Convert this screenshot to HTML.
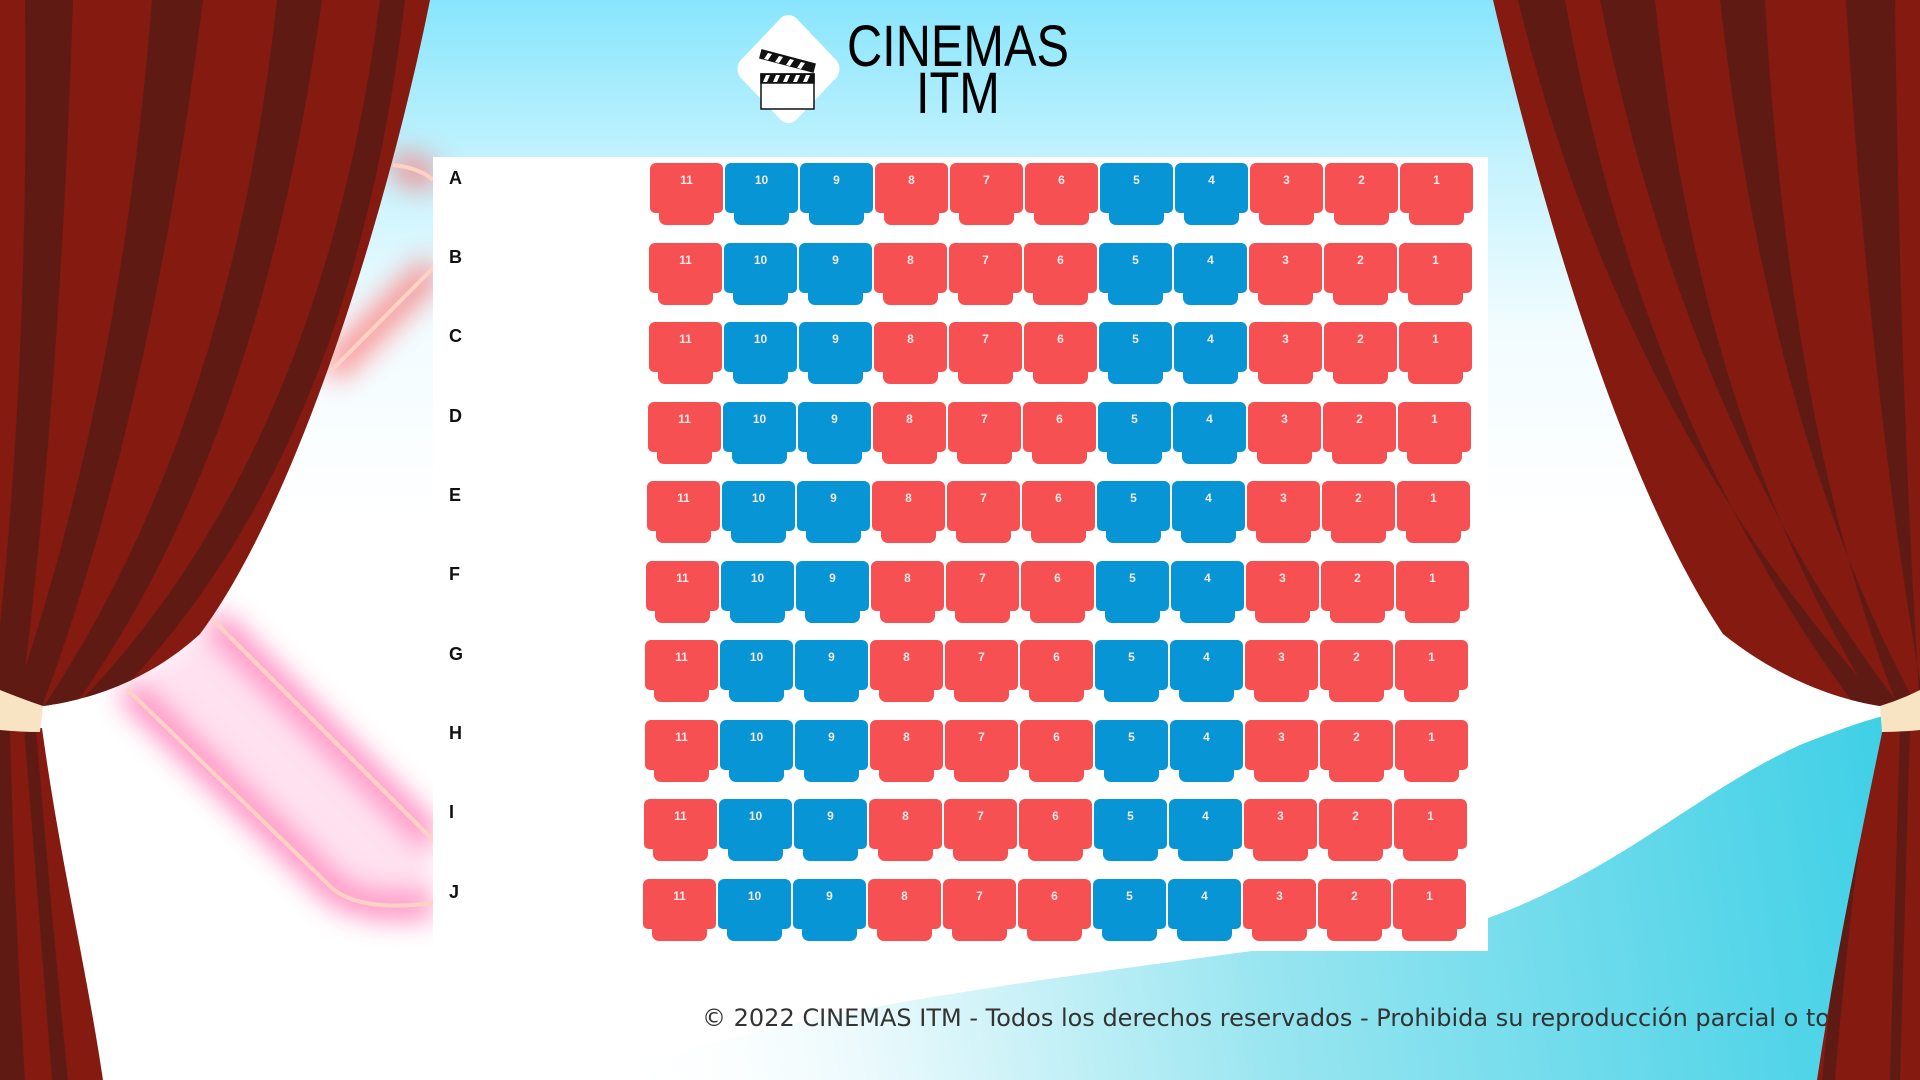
<!DOCTYPE html>
<html><head><meta charset="utf-8"><style>
*{margin:0;padding:0;box-sizing:border-box}
html,body{width:1920px;height:1080px;overflow:hidden}
body{position:relative;background:linear-gradient(#88e5fd 0,#c6f3fd 170px,#f2fcff 330px,#fff 520px);font-family:"Liberation Sans",sans-serif}
svg.bg{position:absolute;left:0;top:0}
.panel{position:absolute;left:433px;top:157px;width:1055px;height:794px;background:#fff}
.lbl{position:absolute;left:449px;font:bold 18px "Liberation Sans",sans-serif;color:#111}
.row{position:absolute;display:flex;gap:2px}
.s{position:relative;width:73px;height:62px}
.s::before{content:"";position:absolute;left:0;top:0;width:73px;height:50px;border-radius:6px 6px 5px 5px}
.s::after{content:"";position:absolute;left:9px;top:44px;width:55px;height:18px;border-radius:0 0 7px 7px}
.r::before,.r::after{background:#f65052}
.b::before,.b::after{background:#0895d5}
.s span{position:absolute;left:0;right:0;top:10px;text-align:center;color:#f4e9e9;font:bold 12px "Liberation Sans",sans-serif;z-index:2}
.logo{position:absolute;left:732px;top:12px;width:113px;height:114px}
.t{position:absolute;font-family:"Liberation Sans",sans-serif;color:#000;transform-origin:0 0;line-height:1}
.foot{position:absolute;left:702px;top:1004px;font:24px "DejaVu Sans","Liberation Sans",sans-serif;color:#333;white-space:nowrap}
svg.fg{position:absolute;left:0;top:0}
</style></head><body>
<svg class="bg" width="1920" height="1080">
<defs>
<filter id="bl" x="-50%" y="-50%" width="200%" height="200%"><feGaussianBlur stdDeviation="14"/></filter>
<linearGradient id="wv" x1="600" y1="1000" x2="1920" y2="800" gradientUnits="userSpaceOnUse">
<stop offset="0" stop-color="#fff" stop-opacity="0"/><stop offset=".2" stop-color="#e8f9fc"/><stop offset=".5" stop-color="#97e5f0"/><stop offset="1" stop-color="#3ccfe6"/></linearGradient>
</defs>
<path d="M600 1080 C800 1000 1100 975 1488 918 C1620 870 1700 790 1800 745 C1850 725 1890 712 1920 708 V1080 Z" fill="url(#wv)"/>
<g filter="url(#bl)" opacity=".8">
<path d="M393 165 Q420 170 433 182 M433 268 L330 372" fill="none" stroke="#ff6a6a" stroke-width="26"/>
<path d="M213 620 L433 840 L433 905 Q360 912 333 889 L127 689 Z" fill="#ff9fd0" opacity=".4"/>
<path d="M213 620 L433 840 M127 689 L333 889 Q360 912 433 905" fill="none" stroke="#ff4fa0" stroke-width="22"/>
</g>
<g fill="none" stroke="#ffd3c4" stroke-width="4">
<path d="M393 165 Q420 168 433 180"/>
<path d="M433 268 L330 372"/>
<path d="M213 620 L433 840"/>
<path d="M127 689 L333 889 Q362 912 433 903"/>
</g>
</svg>
<div class="panel"></div>
<div class="lbl" style="top:168px">A</div>
<div class="lbl" style="top:247px">B</div>
<div class="lbl" style="top:326px">C</div>
<div class="lbl" style="top:406px">D</div>
<div class="lbl" style="top:485px">E</div>
<div class="lbl" style="top:564px">F</div>
<div class="lbl" style="top:644px">G</div>
<div class="lbl" style="top:723px">H</div>
<div class="lbl" style="top:802px">I</div>
<div class="lbl" style="top:882px">J</div>

<div class="row" style="left:650px;top:163px"><div class="s r"><span>11</span></div><div class="s b"><span>10</span></div><div class="s b"><span>9</span></div><div class="s r"><span>8</span></div><div class="s r"><span>7</span></div><div class="s r"><span>6</span></div><div class="s b"><span>5</span></div><div class="s b"><span>4</span></div><div class="s r"><span>3</span></div><div class="s r"><span>2</span></div><div class="s r"><span>1</span></div></div>
<div class="row" style="left:649px;top:243px"><div class="s r"><span>11</span></div><div class="s b"><span>10</span></div><div class="s b"><span>9</span></div><div class="s r"><span>8</span></div><div class="s r"><span>7</span></div><div class="s r"><span>6</span></div><div class="s b"><span>5</span></div><div class="s b"><span>4</span></div><div class="s r"><span>3</span></div><div class="s r"><span>2</span></div><div class="s r"><span>1</span></div></div>
<div class="row" style="left:649px;top:322px"><div class="s r"><span>11</span></div><div class="s b"><span>10</span></div><div class="s b"><span>9</span></div><div class="s r"><span>8</span></div><div class="s r"><span>7</span></div><div class="s r"><span>6</span></div><div class="s b"><span>5</span></div><div class="s b"><span>4</span></div><div class="s r"><span>3</span></div><div class="s r"><span>2</span></div><div class="s r"><span>1</span></div></div>
<div class="row" style="left:648px;top:402px"><div class="s r"><span>11</span></div><div class="s b"><span>10</span></div><div class="s b"><span>9</span></div><div class="s r"><span>8</span></div><div class="s r"><span>7</span></div><div class="s r"><span>6</span></div><div class="s b"><span>5</span></div><div class="s b"><span>4</span></div><div class="s r"><span>3</span></div><div class="s r"><span>2</span></div><div class="s r"><span>1</span></div></div>
<div class="row" style="left:647px;top:481px"><div class="s r"><span>11</span></div><div class="s b"><span>10</span></div><div class="s b"><span>9</span></div><div class="s r"><span>8</span></div><div class="s r"><span>7</span></div><div class="s r"><span>6</span></div><div class="s b"><span>5</span></div><div class="s b"><span>4</span></div><div class="s r"><span>3</span></div><div class="s r"><span>2</span></div><div class="s r"><span>1</span></div></div>
<div class="row" style="left:646px;top:561px"><div class="s r"><span>11</span></div><div class="s b"><span>10</span></div><div class="s b"><span>9</span></div><div class="s r"><span>8</span></div><div class="s r"><span>7</span></div><div class="s r"><span>6</span></div><div class="s b"><span>5</span></div><div class="s b"><span>4</span></div><div class="s r"><span>3</span></div><div class="s r"><span>2</span></div><div class="s r"><span>1</span></div></div>
<div class="row" style="left:645px;top:640px"><div class="s r"><span>11</span></div><div class="s b"><span>10</span></div><div class="s b"><span>9</span></div><div class="s r"><span>8</span></div><div class="s r"><span>7</span></div><div class="s r"><span>6</span></div><div class="s b"><span>5</span></div><div class="s b"><span>4</span></div><div class="s r"><span>3</span></div><div class="s r"><span>2</span></div><div class="s r"><span>1</span></div></div>
<div class="row" style="left:645px;top:720px"><div class="s r"><span>11</span></div><div class="s b"><span>10</span></div><div class="s b"><span>9</span></div><div class="s r"><span>8</span></div><div class="s r"><span>7</span></div><div class="s r"><span>6</span></div><div class="s b"><span>5</span></div><div class="s b"><span>4</span></div><div class="s r"><span>3</span></div><div class="s r"><span>2</span></div><div class="s r"><span>1</span></div></div>
<div class="row" style="left:644px;top:799px"><div class="s r"><span>11</span></div><div class="s b"><span>10</span></div><div class="s b"><span>9</span></div><div class="s r"><span>8</span></div><div class="s r"><span>7</span></div><div class="s r"><span>6</span></div><div class="s b"><span>5</span></div><div class="s b"><span>4</span></div><div class="s r"><span>3</span></div><div class="s r"><span>2</span></div><div class="s r"><span>1</span></div></div>
<div class="row" style="left:643px;top:879px"><div class="s r"><span>11</span></div><div class="s b"><span>10</span></div><div class="s b"><span>9</span></div><div class="s r"><span>8</span></div><div class="s r"><span>7</span></div><div class="s r"><span>6</span></div><div class="s b"><span>5</span></div><div class="s b"><span>4</span></div><div class="s r"><span>3</span></div><div class="s r"><span>2</span></div><div class="s r"><span>1</span></div></div>

<svg class="logo" viewBox="0 0 113 114" width="113" height="114">
<path d="M56.5 3 Q62 3 66 8 L105 49 Q110 57 105 65 L66 106 Q62 111 56.5 111 Q51 111 47 106 L8 65 Q3 57 8 49 L47 8 Q51 3 56.5 3 Z" fill="#fff"/>
<g stroke="#111" stroke-width="1.5" fill="#fff">
<rect x="29" y="62" width="53" height="35"/>
<rect x="29" y="62" width="53" height="9" fill="#111"/>
<path d="M30 38 L83 52 L81 60 L28 46 Z" fill="#111"/>
</g>
<g fill="#fff">
<path d="M34 63 h4 l-3 7 h-4z M44 63 h4 l-3 7 h-4z M54 63 h4 l-3 7 h-4z M64 63 h4 l-3 7 h-4z M74 63 h4 l-3 7 h-4z"/>
<path d="M36 41 l4 1 -4 6 -4 -1z M47 44 l4 1 -4 6 -4 -1z M58 47 l4 1 -4 6 -4 -1z M69 50 l4 1 -4 6 -4 -1z"/>
</g>
</svg>
<div class="t" style="left:847px;top:18px;font-size:58px;transform:scaleX(.84)">CINEMAS</div>
<div class="t" style="left:916px;top:65px;font-size:58px;transform:scaleX(.84)">ITM</div>

<div class="foot">© 2022 CINEMAS ITM - Todos los derechos reservados - Prohibida su reproducción parcial o total</div>

<svg class="fg" width="1920" height="1080">
<defs>
<clipPath id="lc"><path d="M0 0 H430 C390 200 300 500 200 634 C150 680 90 700 43 706 L0 702 Z"/></clipPath>
<clipPath id="ll"><path d="M0 728 H42 C60 860 85 960 103 1080 H0 Z"/></clipPath>
<clipPath id="rc"><path d="M1493 0 C1540 200 1620 480 1723 634 C1780 680 1840 700 1880 706 L1920 700 V0 Z"/></clipPath>
<clipPath id="rl"><path d="M1883 728 H1920 V1080 H1817 C1835 960 1860 840 1883 728 Z"/></clipPath>
</defs>
<g clip-path="url(#lc)">
<rect width="440" height="720" fill="#841a10"/>
<g fill="#601a14">
<path d="M25 0 H73 Q60 400 20 710 H-10 Q30 400 25 0Z"/>
<path d="M152 0 H203 Q150 420 40 712 H10 Q120 400 152 0Z"/>
<path d="M277 0 H322 Q260 450 70 712 H40 Q230 430 277 0Z"/>
<path d="M380 0 H405 Q350 470 100 712 H70 Q320 460 380 0Z"/>
</g>
</g>
<g clip-path="url(#ll)">
<rect x="0" y="720" width="110" height="360" fill="#841a10"/>
<path d="M0 728 H10 Q14 900 25 1080 H0Z M24 728 H36 Q50 900 68 1080 H52 Q38 900 24 728Z" fill="#601a14"/>
</g>
<path d="M0 690 Q25 700 43 706 L40 732 Q20 732 0 730 Z" fill="#f8e4c3"/>
<g clip-path="url(#rc)">
<rect x="1480" width="440" height="720" fill="#841a10"/>
<g fill="#601a14">
<path d="M1518 0 H1565 Q1640 420 1860 712 H1890 Q1620 420 1518 0Z"/>
<path d="M1600 0 H1655 Q1700 430 1880 712 H1905 Q1690 440 1600 0Z"/>
<path d="M1720 0 H1765 Q1790 440 1900 712 H1920 Q1770 440 1720 0Z"/>
<path d="M1846 0 H1895 Q1900 400 1920 710 H1925 Q1870 400 1846 0Z"/>
</g>
</g>
<g clip-path="url(#rl)">
<rect x="1800" y="720" width="120" height="360" fill="#841a10"/>
<path d="M1860 728 H1875 Q1850 900 1835 1080 H1822 Q1840 900 1860 728Z M1900 728 H1910 Q1905 900 1900 1080 H1890 Q1895 900 1900 728Z" fill="#601a14"/>
</g>
<path d="M1920 690 Q1900 700 1880 706 L1882 732 Q1900 732 1920 730 Z" fill="#f8e4c3"/>
</svg>
</body></html>
